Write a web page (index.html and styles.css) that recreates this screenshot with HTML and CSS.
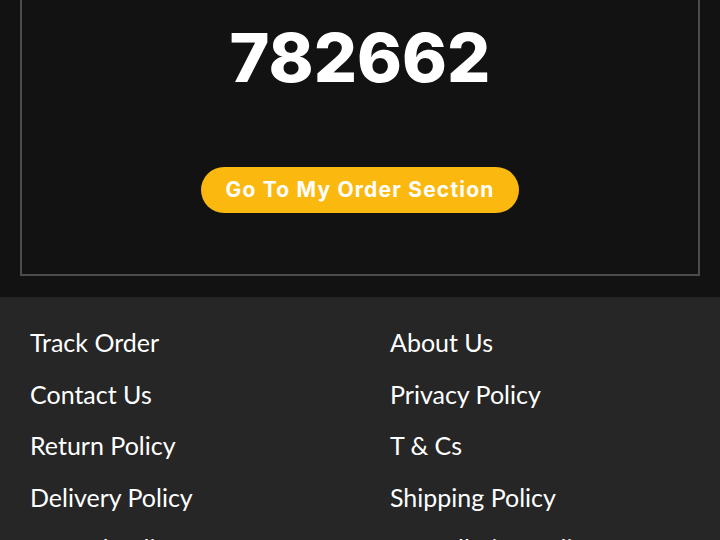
FILE: index.html
```html
<!DOCTYPE html>
<html lang="en">
<head>
    <meta charset="UTF-8">
    <meta name="viewport" content="width=device-width, initial-scale=1.0">
    <title>Order Placed</title>
    <link rel="stylesheet" href="styles.css">
</head>
<body>
    <div class="main">
        <div class="order-box">
            <div class="order-number">782662</div>
            <a class="order-btn" href="#">Go To My Order Section</a>
        </div>
    </div>

    <div class="footer">
        <ul class="footer-links">
            <li><a href="#">Track Order</a></li>
            <li><a href="#">About Us</a></li>
            <li><a href="#">Contact Us</a></li>
            <li><a href="#">Privacy Policy</a></li>
            <li><a href="#">Return Policy</a></li>
            <li><a href="#">T &amp; Cs</a></li>
            <li><a href="#">Delivery Policy</a></li>
            <li><a href="#">Shipping Policy</a></li>
            <li><a href="#">Refund Policy</a></li>
            <li><a href="#">Cancellation Policy</a></li>
        </ul>
    </div>
</body>
</html>
```

FILE: styles.css
```css
body {
    margin: 0;
    font-family: Lato, "Open Sans", sans-serif;
    background-color: #121212;
    color: #fff;
}
a {
    color: #fff;
    text-decoration: none;
}
.main {
    padding: 0 20px 21px;
}
.order-box {
    border: 2px solid #4c4c4c;
    border-top: none;
    display: flex;
    flex-direction: column;
    align-items: center;
    padding: 19px 0 61px;
}
.order-number {
    font-family: Inter, "Liberation Sans", sans-serif;
    font-size: 68px;
    font-weight: 800;
    line-height: 76px;
}
.order-btn {
    margin-top: 72px;
    display: inline-block;
    background-color: #fbb90f;
    border-radius: 23px;
    height: 46px;
    line-height: 46px;
    padding: 0 24px;
    font-family: Inter, "Liberation Sans", sans-serif;
    font-size: 21px;
    font-weight: 700;
    letter-spacing: 1.2px;
}
.footer {
    background-color: #262626;
    padding: 20px 30px 0;
}
.footer-links {
    list-style: none;
    margin: 0;
    padding: 0;
    display: grid;
    grid-template-columns: 330px 330px;
    column-gap: 30px;
}
.footer-links li {
    font-size: 25px;
    line-height: 51.5px;
}
```
